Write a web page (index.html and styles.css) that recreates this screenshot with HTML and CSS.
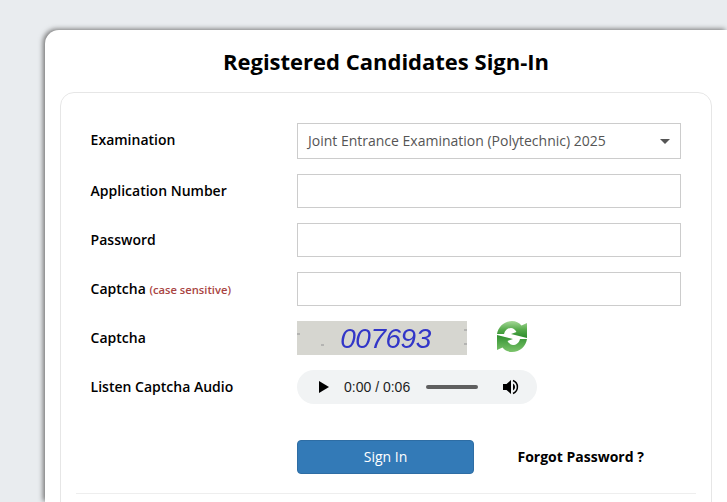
FILE: index.html
```html
<!DOCTYPE html>
<html lang="en">
<head>
<meta charset="utf-8">
<title>Registered Candidates Sign-In</title>
<link rel="stylesheet" href="styles.css">
</head>
<body>
<main class="card">
  <h1 class="title">Registered Candidates Sign-In</h1>
  <form class="panel">
    <label class="label label-first">Examination</label>
    <div class="select">
      <span>Joint Entrance Examination (Polytechnic) 2025</span>
      <i class="caret"></i>
    </div>
    <label class="label">Application Number</label>
    <input class="input" type="text">
    <label class="label">Password</label>
    <input class="input" type="password">
    <label class="label">Captcha <small class="hint">(case sensitive)</small></label>
    <input class="input" type="text">
    <label class="label">Captcha</label>
    <div class="captcha-row">
      <div class="captcha"><span class="speck s1"></span><span class="speck s2"></span><span class="speck s3"></span><span class="speck s4"></span><span class="captcha-text">007693</span></div>
      <svg class="refresh" width="30" height="31" viewBox="0 0 30 31" aria-label="Refresh">
        <defs>
          <linearGradient id="g1" x1="0" y1="0" x2="0" y2="1"><stop offset="0" stop-color="#a5d897"/><stop offset=".5" stop-color="#57ab4c"/><stop offset="1" stop-color="#2a8a2a"/></linearGradient>
          <linearGradient id="g2" x1="0" y1="0" x2="0" y2="1"><stop offset="0" stop-color="#2f8f2e"/><stop offset="1" stop-color="#7cc46c"/></linearGradient>
        </defs>
        <path d="M0 13C1 6 7 0 15 0c4 0 7 1.500 9.500 4.500L30 2v15L14 13l5.500-2C18 8.500 16 7 14 7c-3 0-6 2-7 6Z" fill="url(#g1)"/>
        <path d="M30 18c-1 7-7 13-15 13-4 0-7-1.500-9.500-4.500L0 29V14l16 4-5.500 2c1.500 2.500 3.500 4 5.500 4 3 0 6-2 7-6Z" fill="url(#g2)"/>
      </svg>
    </div>
    <label class="label">Listen Captcha Audio</label>
    <div class="audio">
      <svg class="play" width="10" height="12" viewBox="0 0 10 12"><path d="M0 0l10 6-10 6Z"/></svg>
      <span class="time">0:00 / 0:06</span>
      <span class="track"></span>
      <svg class="vol" width="16" height="16" viewBox="0 0 16 16"><path d="M0 5h3.500L8 1v14l-4.500-4H0Z"/><path d="M10 4.500a4 4 0 0 1 0 7Z"/><path d="M10 1.500a7 7 0 0 1 0 13" fill="none" stroke="#000" stroke-width="1.500"/></svg>
    </div>
    <div class="actions">
      <button class="btn" type="button">Sign In</button>
      <a class="forgot">Forgot Password ?</a>
    </div>
    <hr class="rule">
  </form>
</main>
</body>
</html>
```

FILE: styles.css
```css
* { box-sizing: border-box; }
html, body { margin: 0; height: 502px; overflow: hidden; }
body {
  background: #e9ecef;
  padding: 30px 0 0 45px;
  font-family: "Open Sans", "Liberation Sans", sans-serif;
  color: #000;
}
.card {
  width: 682px;
  height: 472px;
  background: #fff;
  border-radius: 14px 0 0 0;
  padding: 0 15px;
  box-shadow: -2px -1px 5px 0 #777;
  overflow: hidden;
}
.title {
  margin: 0;
  height: 62px;
  font-size: 22px;
  line-height: 62px;
  font-weight: 700;
  text-align: center;
}
.panel {
  display: grid;
  grid-template-columns: 206px 384px;
  row-gap: 15px;
  align-items: center;
  padding: 30px;
  border: 1px solid #e6e6e6;
  border-radius: 14px;
  height: 450px;
  align-content: start;
}
.label { font-size: 14px; font-weight: 600; line-height: 20px; margin-left: -0.4px; }
.label-first { padding-bottom: 2px; }
.hint { font-size: 11.2px; color: #a94442; font-weight: 600; }
.select {
  height: 36px;
  border: 1px solid #ccc;
  display: flex;
  align-items: center;
  justify-content: space-between;
  padding: 0 10px 2px;
  font-size: 14px;
  color: #555;
}
.caret {
  width: 0;
  height: 0;
  margin-top: 2px;
  border-left: 5px solid transparent;
  border-right: 5px solid transparent;
  border-top: 5px solid #555;
}
.input {
  display: block;
  width: 100%;
  height: 34px;
  border: 1px solid #ccc;
  background: #fff;
  padding: 0 10px;
  outline: 0;
}
.captcha-row { display: flex; align-items: flex-start; gap: 30px; }
.captcha {
  position: relative;
  width: 170px;
  height: 34px;
  background: #d6d6d0;
  display: flex;
  align-items: center;
  justify-content: center;
  overflow: hidden;
}
.captcha-text {
  font-family: "Liberation Sans", sans-serif;
  font-style: italic;
  font-size: 28px;
  letter-spacing: -0.5px;
  color: #3236c8;
  padding: 1px 0 0 7px;
  filter: blur(0.4px);
}
.speck { position: absolute; width: 3px; height: 2px; background: #b4b4b2; }
.s1 { left: 0; top: 12px; }
.s2 { left: 24px; top: 23px; }
.s3 { left: 167px; top: 8px; }
.s4 { left: 167px; top: 22px; }
.refresh { display: block; }
.audio {
  width: 240px;
  height: 34px;
  border-radius: 17px;
  background: #f1f3f4;
  display: flex;
  align-items: center;
  padding-left: 22px;
}
.play { margin-right: 15px; }
.time { font-family: "Liberation Sans", sans-serif; font-size: 14px; color: #1f1f1f; width: 82px; }
.track { width: 52px; height: 4px; border-radius: 2px; background: #5f5f5f; }
.vol { margin-left: 25px; }
.actions {
  grid-column: 2;
  display: flex;
  align-items: center;
  gap: 43.5px;
  margin-top: 21px;
}
.btn {
  width: 177px;
  height: 34px;
  padding: 0 0 2px;
  background: #337ab7;
  border: 1px solid #2e6da4;
  border-radius: 4px;
  color: #fff;
  font: 400 14px "Open Sans", sans-serif;
}
.forgot { font-size: 14px; font-weight: 700; padding-bottom: 2px; }
.rule {
  grid-column: 1 / -1;
  width: 620px;
  margin: 4px 0 0 -15px;
  border: 0;
  border-top: 1px solid #eee;
}
```
